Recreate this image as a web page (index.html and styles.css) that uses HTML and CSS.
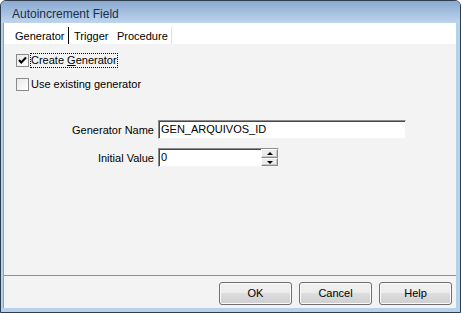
FILE: index.html
```html
<!DOCTYPE html>
<html>
<head>
<meta charset="utf-8">
<link rel="stylesheet" href="styles.css">
</head>
<body>
<div class="window">
  <div class="titlebar">Autoincrement Field</div>
  <div class="client">
    <div class="tabs">
      <div class="tab tab-gen">Generator</div>
      <div class="tab tab-trig">Trigger</div>
      <div class="tab tab-proc">Procedure</div>
    </div>
    <div class="page">
      <div class="checks">
        <div class="check-row">
          <span class="box">
            <svg width="11" height="11" viewBox="0 0 11 11"><polyline points="2,5 4.3,7.5 9,2.5" fill="none" stroke="#000" stroke-width="2"/></svg>
          </span>
          <span class="check-label focused">Create <u>G</u>enerator</span>
        </div>
        <div class="check-row">
          <span class="box"></span>
          <span class="check-label">Use existing generator</span>
        </div>
      </div>
      <div class="form">
        <div class="lbl">Generator Name</div>
        <div class="field field-name"><span class="val">GEN_ARQUIVOS_ID</span></div>
        <div class="lbl">Initial Value</div>
        <div class="field field-init">
          <span class="val">0</span>
          <span class="spin">
            <span class="spin-btn up"><i></i></span>
            <span class="spin-btn down"><i></i></span>
          </span>
        </div>
      </div>
    </div>
    <div class="footer">
      <div class="btn">OK</div>
      <div class="btn">Cancel</div>
      <div class="btn">Help</div>
    </div>
  </div>
</div>
</body>
</html>
```
FILE: styles.css
```css
html, body {
  margin: 0;
  padding: 0;
  background: #ffffff;
}
body {
  font-family: "Liberation Sans", Arial, sans-serif;
  font-size: 11px;
  color: #000;
}
.window {
  width: 461px;
  height: 313px;
  box-sizing: border-box;
  border: 1px solid #2f3d4c;
  border-radius: 6px 6px 0 0;
  background: #b4d2ec;
  display: flex;
  flex-direction: column;
  overflow: hidden;
}
.titlebar {
  height: 22px;
  box-sizing: border-box;
  padding: 5px 0 0 11px;
  line-height: 16px;
  font-size: 12px;
  color: #1b2f4e;
  background: linear-gradient(#8ca9cf 0%, #a3bedf 50%, #bfd5ed 100%);
  flex: none;
}
.client {
  flex: none;
  height: 285px;
  margin: 0 4px 4px 2px;
  border-left: 1px solid #8aa0b8;
  background: #f3f3f3;
  display: flex;
  flex-direction: column;
}
.tabs {
  height: 21px;
  background: #ffffff;
  display: flex;
  align-items: flex-start;
  padding-left: 6px;
  flex: none;
}
.tab {
  margin-top: 4px;
  height: 17px;
  box-sizing: border-box;
  padding: 2px 0 0 5px;
  line-height: 15px;
  white-space: nowrap;
}
.tab-gen {
  width: 59px;
  border-right: 1px solid #000;
}
.tab-trig {
  width: 43px;
}
.tab-proc {
  width: 60px;
  border-right: 1px solid #e4e4e4;
}
.page {
  flex: 1;
  display: flex;
  flex-direction: column;
}
.checks {
  padding: 9px 0 0 12px;
  display: flex;
  flex-direction: column;
  gap: 9px;
}
.check-row {
  display: flex;
  align-items: center;
  height: 15px;
}
.box {
  width: 13px;
  height: 13px;
  box-sizing: border-box;
  border: 1px solid #8a8a8a;
  background: linear-gradient(135deg, #e8e8e8, #ffffff);
  display: flex;
  align-items: center;
  justify-content: center;
  margin-right: 1px;
}
.check-label {
  border: 1px solid transparent;
  line-height: 13px;
  padding: 0 0 0 0;
  white-space: nowrap;
}
.check-label.focused {
  border: 1px dotted #000;
}
.form {
  margin-top: 28px;
  display: grid;
  grid-template-columns: 150px auto;
  column-gap: 4px;
  row-gap: 9px;
  justify-content: start;
  align-items: center;
}
.lbl {
  text-align: right;
  white-space: nowrap;
}
.field {
  height: 19px;
  box-sizing: border-box;
  background: #fff;
  border: 1px solid;
  border-color: #8c8c8c #f5f5f5 #f5f5f5 #8c8c8c;
  box-shadow: inset 1px 1px 0 #474747;
  display: flex;
  align-items: center;
  padding-left: 2px;
}
.field-name {
  width: 248px;
}
.field-init {
  width: 121px;
  padding-right: 0;
}
.val {
  flex: 1;
  line-height: 15px;
}
.spin {
  width: 17px;
  height: 17px;
  display: flex;
  flex-direction: column;
  align-self: flex-end;
}
.spin-btn {
  box-sizing: border-box;
  background: #ececec;
  border: 1px solid;
  border-color: #ffffff #8a8a8a #8a8a8a #ffffff;
  box-shadow: inset -1px -1px 0 #c8c8c8;
  display: flex;
  align-items: center;
  justify-content: center;
}
.spin-btn.up {
  height: 9px;
}
.spin-btn.down {
  height: 8px;
}
.spin-btn i {
  width: 0;
  height: 0;
  border-left: 3px solid transparent;
  border-right: 3px solid transparent;
}
.spin-btn.up i {
  border-bottom: 3px solid #000;
}
.spin-btn.down i {
  border-top: 3px solid #000;
}
.footer {
  flex: none;
  height: 33px;
  box-sizing: border-box;
  border-top: 1px solid #8e8e8e;
  display: flex;
  justify-content: flex-end;
  align-items: flex-start;
  padding: 6px 4px 0 0;
  gap: 7px;
}
.btn {
  width: 73px;
  height: 23px;
  box-sizing: border-box;
  border: 1px solid #707070;
  border-radius: 3px;
  background: linear-gradient(#f2f2f2 0%, #ebebeb 50%, #dddddd 50%, #cfcfcf 100%);
  box-shadow: inset 0 0 0 1px #fbfbfb;
  text-align: center;
  line-height: 21px;
  color: #000;
}
```
